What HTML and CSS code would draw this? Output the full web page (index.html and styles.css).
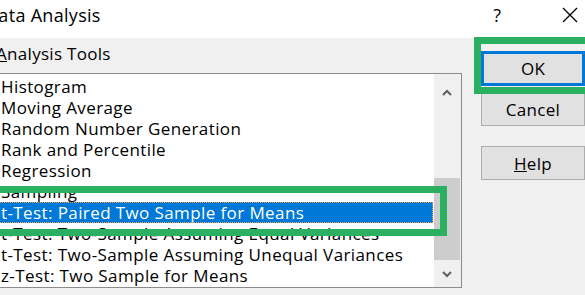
FILE: index.html
```html
<!DOCTYPE html>
<html lang="en">
<head>
    <meta charset="UTF-8">
    <title>Data Analysis</title>
    <link rel="stylesheet" href="styles.css">
</head>
<body>
    <div class="window">
        <div class="titlebar">
            <span class="title">Data Analysis</span>
            <span class="help-icon">?</span>
            <svg class="close-icon" width="16" height="16" viewBox="0 0 16 16">
                <path d="M1 1 L15 15 M15 1 L1 15" stroke="#000" stroke-width="1.3" fill="none"/>
            </svg>
        </div>

        <div class="dialog">
            <div class="tools">
                <div class="tools-label"><u>A</u>nalysis Tools</div>
                <div class="listbox">
                    <ul class="items">
                        <li>Histogram</li>
                        <li>Moving Average</li>
                        <li>Random Number Generation</li>
                        <li>Rank and Percentile</li>
                        <li>Regression</li>
                        <li>Sampling</li>
                        <li class="selected">t-Test: Paired Two Sample for Means</li>
                        <li>t-Test: Two-Sample Assuming Equal Variances</li>
                        <li>t-Test: Two-Sample Assuming Unequal Variances</li>
                        <li>z-Test: Two Sample for Means</li>
                    </ul>
                    <div class="scrollbar">
                        <div class="arrow arrow-up">
                            <svg width="10" height="7" viewBox="0 0 10 7"><path d="M1 6 L5 2 L9 6" stroke="#606060" stroke-width="2" fill="none"/></svg>
                        </div>
                        <div class="track"><div class="thumb"></div></div>
                        <div class="arrow arrow-down">
                            <svg width="10" height="7" viewBox="0 0 10 7"><path d="M1 1 L5 5 L9 1" stroke="#606060" stroke-width="2" fill="none"/></svg>
                        </div>
                    </div>
                </div>
            </div>

            <div class="actions">
                <button class="btn btn-default">OK</button>
                <button class="btn">Cancel</button>
                <button class="btn btn-help"><u>H</u>elp</button>
            </div>
        </div>

        <!-- green callouts drawn over the dialog -->
        <div class="mark mark-list"></div>
        <div class="mark mark-ok"></div>
    </div>
</body>
</html>
```

FILE: styles.css
```css
:root {
    --dialog-bg: #f0f0f0;
    --button-bg: #e1e1e1;
    --button-border: #adadad;
    --list-border: #8c8c8c;
    --select-blue: #0078d7;
    --thumb: #cdcdcd;
    --mark-green: #2bb062;
    --font-family: 'Open Sans', 'Noto Sans', sans-serif;
}

* {
    margin: 0;
    padding: 0;
    box-sizing: border-box;
}

body {
    width: 585px;
    height: 295px;
    overflow: hidden;
    background: var(--dialog-bg);
    font-family: var(--font-family);
    color: #000;
}

.window {
    position: relative;
    width: 585px;
    height: 295px;
}

.titlebar {
    height: 38px;
    background: #fff;
    display: flex;
    align-items: center;
}

.title {
    margin-left: -15px;
    font-size: 18px;
    letter-spacing: 0.3px;
    margin-top: -9px;
}

.help-icon {
    margin-left: auto;
    font-size: 18px;
    margin-top: -8px;
}

.close-icon {
    margin: -8px 7px 0 61px;
}

.dialog {
    display: flex;
    height: 257px;
}

.tools {
    margin-left: -12px;
    width: 476px;
}

.tools-label {
    padding: 6px 0 0 8px;
    line-height: 20px;
    font-size: 17px;
    letter-spacing: 0.3px;
}

.listbox {
    margin-top: 9px;
    height: 215px;
    border: 1px solid var(--list-border);
    background: #fff;
    display: flex;
}

.items {
    list-style: none;
    flex: 1;
    padding: 2px 1px 0 0;
    overflow: hidden;
}

.items li {
    height: 21px;
    line-height: 21px;
    padding-left: 12px;
    font-size: 17px;
    letter-spacing: 0.4px;
    white-space: nowrap;
}

.items li.selected {
    background: var(--select-blue);
    color: #fff;
    outline: 1px dotted #f0a040;
    outline-offset: -1px;
}

.scrollbar {
    width: 27px;
    background: var(--dialog-bg);
    display: flex;
    flex-direction: column;
    padding-right: 1px;
}

.arrow {
    display: flex;
    justify-content: center;
    align-items: center;
}

.arrow-up {
    height: 36px;
}

.arrow-down {
    height: 26px;
}

.track {
    flex: 1;
    display: flex;
    flex-direction: column;
    justify-content: flex-end;
    padding-bottom: 1px;
}

.thumb {
    height: 82px;
    background: var(--thumb);
}

.actions {
    margin-left: 19px;
    padding-top: 13px;
    display: flex;
    flex-direction: column;
}

.btn {
    width: 104px;
    height: 34px;
    background: var(--button-bg);
    border: 1px solid var(--button-border);
    font-family: var(--font-family);
    font-size: 17px;
    letter-spacing: 0.3px;
    color: #000;
}

.btn-default {
    border: 3px solid var(--select-blue);
    height: 35px;
}

.btn + .btn {
    margin-top: 6px;
}

.btn-help {
    margin-top: 20px !important;
}

.mark {
    position: absolute;
    border: 7px solid var(--mark-green);
}

.mark-list {
    left: -20px;
    top: 186px;
    width: 467px;
    height: 50px;
}

.mark-ok {
    left: 474px;
    top: 37px;
    width: 130px;
    height: 57px;
}
```
